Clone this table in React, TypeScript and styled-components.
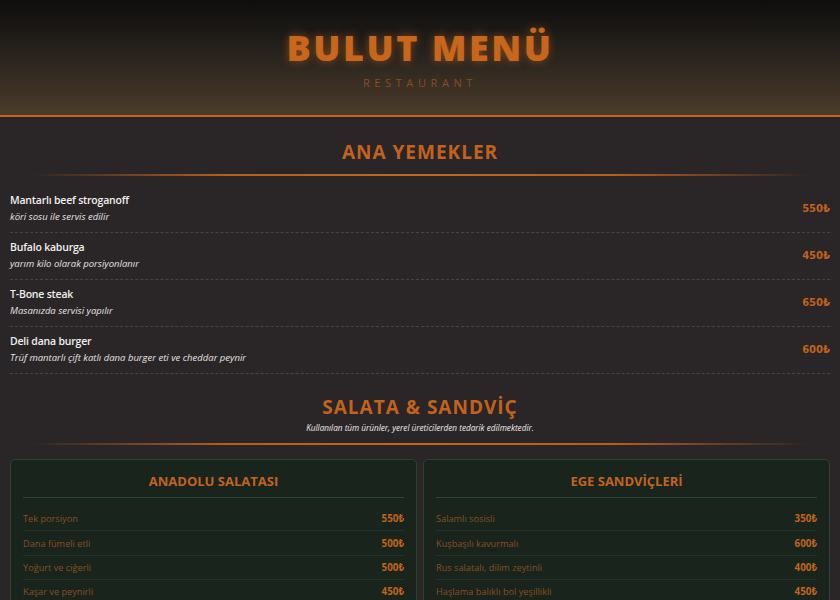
import React from "react";
import styled, { createGlobalStyle } from "styled-components";

const GlobalStyle = createGlobalStyle`
  html, body { margin: 0; padding: 0; background: #2a2526; }
  body { font-family: "Open Sans", "Noto Sans", sans-serif; }
  ::-webkit-scrollbar { width: 3px; }
  ::-webkit-scrollbar-track { background: #2a2526; }
  ::-webkit-scrollbar-thumb { background: #7a7878; border-radius: 2px; }
`;

const Page = styled.div`
  background: #2a2526;
  min-height: 100vh;
  padding-bottom: 60px;
`;

const Header = styled.header`
  height: 117px;
  box-sizing: border-box;
  background: linear-gradient(180deg, #0e0e0e 0%, #2a241e 50%, #4c3c2b 100%);
  border-bottom: 2px solid #c4661f;
  display: flex;
  flex-direction: column;
  align-items: center;
  padding-top: 26px;
`;

const Title = styled.h1`
  margin: 0;
  font-family: "Open Sans", sans-serif;
  font-weight: 800;
  font-size: 36px;
  line-height: 44px;
  letter-spacing: 2.5px;
  color: #c8661b;
  text-shadow: 0 0 8px rgba(210, 110, 30, 0.55);
`;

const Subtitle = styled.div`
  margin-top: 5px;
  font-size: 11px;
  letter-spacing: 4.6px;
  color: #8e4b1d;
`;

const Main = styled.main`
  padding: 0 10px;
`;

const SectionHead = styled.div<{ $top: number }>`
  display: flex;
  flex-direction: column;
  align-items: center;
  padding-top: ${(p) => p.$top}px;
`;

const SectionTitle = styled.h2`
  margin: 0;
  font-size: 19px;
  line-height: 26px;
  font-weight: 700;
  letter-spacing: 1px;
  color: #c2621d;
`;

const SectionNote = styled.div`
  margin-top: 2px;
  font-size: 8.2px;
  line-height: 12px;
  font-style: italic;
  color: #eeeeee;
`;

const Divider = styled.div<{ $mt: number }>`
  align-self: stretch;
  margin: ${(p) => p.$mt}px 20px 0;
  height: 2px;
  background: linear-gradient(90deg, rgba(196, 102, 31, 0) 0%, #b85e1d 25%, #c4661f 50%, #b85e1d 75%, rgba(196, 102, 31, 0) 100%);
`;

const List = styled.div`
  margin-top: 10px;
`;

const Row = styled.div`
  display: flex;
  align-items: center;
  justify-content: space-between;
  padding: 6px 0 8px;
  border-bottom: 1px dashed #3b4a47;
`;

const RowText = styled.div`
  display: flex;
  flex-direction: column;
`;

const ItemName = styled.div`
  font-size: 10.5px;
  line-height: 16px;
  font-weight: 600;
  letter-spacing: -0.2px;
  color: #f0f0f0;
`;

const ItemDesc = styled.div`
  margin-top: 1px;
  font-size: 9.5px;
  line-height: 15px;
  font-style: italic;
  color: #e4e4e4;
`;

const Price = styled.div`
  font-family: "DejaVu Sans", sans-serif;
  font-weight: 700;
  font-size: 10px;
  color: #c2621d;
`;

const Cards = styled.div`
  margin-top: 14px;
  display: grid;
  grid-template-columns: 1fr 1fr;
  gap: 6px;
`;

const Card = styled.div`
  background: #18241c;
  border: 1px solid #2b4333;
  border-radius: 5px;
  padding: 12px 12px 10px;
`;

const CardTitle = styled.h3`
  margin: 0;
  text-align: center;
  font-size: 13px;
  line-height: 18px;
  font-weight: 700;
  color: #c4631d;
  padding-bottom: 7px;
  border-bottom: 1px solid #2b4635;
`;

const CardList = styled.div`
  margin-top: 9px;
`;

const CardRow = styled.div`
  box-sizing: border-box;
  display: flex;
  justify-content: space-between;
  align-items: center;
  height: 24.4px;
  border-bottom: 1px solid #21342a;
  &:last-child { border-bottom: none; }
`;

const CardItem = styled.span`
  font-size: 9.2px;
  color: #8c4f1f;
`;

const CardPrice = styled.span`
  font-size: 9.8px;
  font-weight: 700;
  color: #c2641e;
`;

const mains = [
  { name: "Mantarlı beef stroganoff", desc: "köri sosu ile servis edilir", price: "550₺" },
  { name: "Bufalo kaburga", desc: "yarım kilo olarak porsiyonlanır", price: "450₺" },
  { name: "T-Bone steak", desc: "Masanızda servisi yapılır", price: "650₺" },
  { name: "Deli dana burger", desc: "Trüf mantarlı çift katlı dana burger eti ve cheddar peynir", price: "600₺" },
];

const desserts = [
  { name: "Fırın sütlaç", desc: "fındık kırığı ile servis edilir", price: "180₺" },
  { name: "Künefe", desc: "Antep fıstıklı, sıcak servis", price: "250₺" },
  { name: "Kazandibi", desc: "tarçın ve dondurma ile", price: "200₺" },
  { name: "Trileçe", desc: "karamel soslu ev yapımı", price: "190₺" },
];

const cards = [
  {
    title: "ANADOLU SALATASI",
    items: [
      ["Tek porsiyon", "550₺"],
      ["Dana fümeli etli", "500₺"],
      ["Yoğurt ve ciğerli", "500₺"],
      ["Kaşar ve peynirli", "450₺"],
      ["Ton balıklı", "500₺"],
      ["Tavuklu sezar", "480₺"],
      ["Mevsim yeşillikli", "350₺"],
    ],
  },
  {
    title: "EGE SANDVİÇLERİ",
    items: [
      ["Salamlı sosisli", "350₺"],
      ["Kuşbaşılı kavurmalı", "600₺"],
      ["Rus salatalı, dilim zeytinli", "400₺"],
      ["Haşlama balıklı bol yeşillikli", "450₺"],
      ["Tavuk göğüslü", "400₺"],
      ["Köfteli domatesli", "420₺"],
      ["Beyaz peynirli", "300₺"],
    ],
  },
];

const MenuRows = ({ items }: { items: { name: string; desc: string; price: string }[] }) => (
  <List>
    {items.map((m) => (
      <Row key={m.name}>
        <RowText>
          <ItemName>{m.name}</ItemName>
          <ItemDesc>{m.desc}</ItemDesc>
        </RowText>
        <Price>{m.price}</Price>
      </Row>
    ))}
  </List>
);

export default function App() {
  return (
    <Page>
      <GlobalStyle />
      <Header>
        <Title>BULUT MENÜ</Title>
        <Subtitle>RESTAURANT</Subtitle>
      </Header>
      <Main>
        <SectionHead $top={22}>
          <SectionTitle>ANA YEMEKLER</SectionTitle>
          <Divider $mt={9} />
        </SectionHead>
        <MenuRows items={mains} />

        <SectionHead $top={20}>
          <SectionTitle>SALATA &amp; SANDVİÇ</SectionTitle>
          <SectionNote>Kullanılan tüm ürünler, yerel üreticilerden tedarik edilmektedir.</SectionNote>
          <Divider $mt={9} />
        </SectionHead>
        <Cards>
          {cards.map((c) => (
            <Card key={c.title}>
              <CardTitle>{c.title}</CardTitle>
              <CardList>
                {c.items.map(([n, p]) => (
                  <CardRow key={n}>
                    <CardItem>{n}</CardItem>
                    <CardPrice>{p}</CardPrice>
                  </CardRow>
                ))}
              </CardList>
            </Card>
          ))}
        </Cards>

        <SectionHead $top={24}>
          <SectionTitle>TATLILAR</SectionTitle>
          <Divider $mt={9} />
        </SectionHead>
        <MenuRows items={desserts} />
      </Main>
    </Page>
  );
}
